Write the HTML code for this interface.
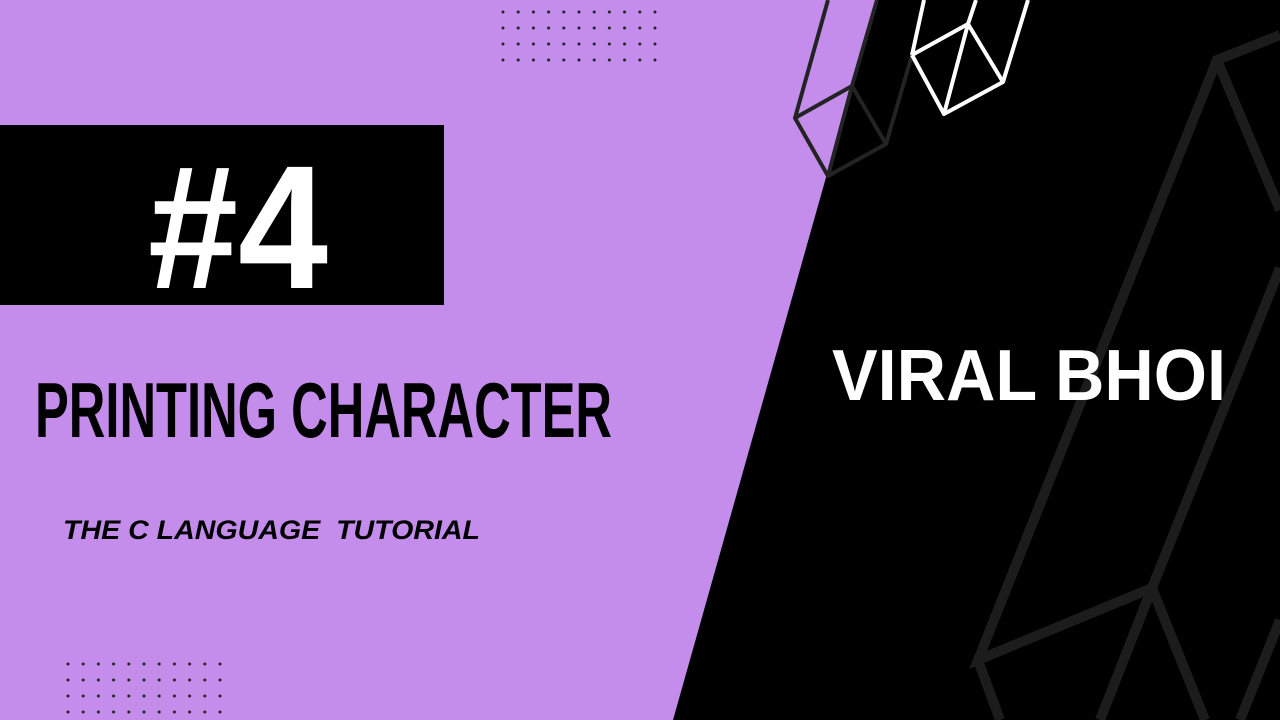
<!DOCTYPE html>
<html><head><meta charset="utf-8"><style>html,body{margin:0;padding:0;width:1280px;height:720px;overflow:hidden;background:#000}</style></head>
<body>
<svg width="1280" height="720" viewBox="0 0 1280 720" xmlns="http://www.w3.org/2000/svg">
<defs>
<pattern id="dotsT" x="501.5" y="10.5" width="15.2" height="16" patternUnits="userSpaceOnUse">
<circle cx="1.5" cy="1.5" r="1.5" fill="#222"/>
</pattern>
<pattern id="dotsB" x="66.5" y="662.5" width="15.2" height="16" patternUnits="userSpaceOnUse">
<circle cx="1.5" cy="1.5" r="1.5" fill="#222"/>
</pattern>
</defs>
<rect width="1280" height="720" fill="#000"/>
<polygon points="0,0 876,0 673,720 0,720" fill="#c48dec"/>
<g fill="none" stroke="#1c1c1c" stroke-width="10" stroke-linejoin="miter">
<polyline points="1280,35 1217,60 978,660 1152,588 1280,268"/>
<polyline points="1217,60 1280,210"/>
<polyline points="978,660 1000,720"/>
<polyline points="1100,720 1152,588 1205,720"/>
<polyline points="1280,620 1240,720"/>
</g>
<g fill="none" stroke="#232323" stroke-width="4" stroke-linejoin="round">
<polyline points="828,0 795,118 852,86 886,144 828,176 795,118"/>
<polyline points="877,0 852,86 828,176"/>
<polyline points="886,144 912,55"/>
</g>
<g fill="none" stroke="#fff" stroke-width="4" stroke-linejoin="round">
<polyline points="912,55 968,24 1003,82 944,114 912,55"/>
<polyline points="976,0 968,24 944,114"/>
<polyline points="1028,0 1003,82"/>
<polyline points="924,0 912,55"/>
</g>
<rect x="501.5" y="10.5" width="158" height="54" fill="url(#dotsT)"/>
<rect x="66.5" y="662.5" width="158" height="54" fill="url(#dotsB)"/>
<rect x="0" y="125" width="444" height="180" fill="#000"/>
<text x="148" y="288" font-family="Liberation Sans, sans-serif" font-weight="bold" font-size="176" fill="#fff" textLength="180" lengthAdjust="spacingAndGlyphs">#4</text>
<text x="35" y="437" font-family="Liberation Sans, sans-serif" font-weight="bold" font-size="78" fill="#000" textLength="577" lengthAdjust="spacingAndGlyphs">PRINTING CHARACTER</text>
<text x="63" y="539" font-family="Liberation Sans, sans-serif" font-weight="bold" font-style="italic" font-size="27" fill="#000" textLength="417" lengthAdjust="spacingAndGlyphs" xml:space="preserve">THE C LANGUAGE  TUTORIAL</text>
<text x="832" y="400" font-family="Liberation Sans, sans-serif" font-weight="bold" font-size="72" fill="#fff" textLength="394" lengthAdjust="spacingAndGlyphs">VIRAL BHOI</text>
</svg>
</body></html>
